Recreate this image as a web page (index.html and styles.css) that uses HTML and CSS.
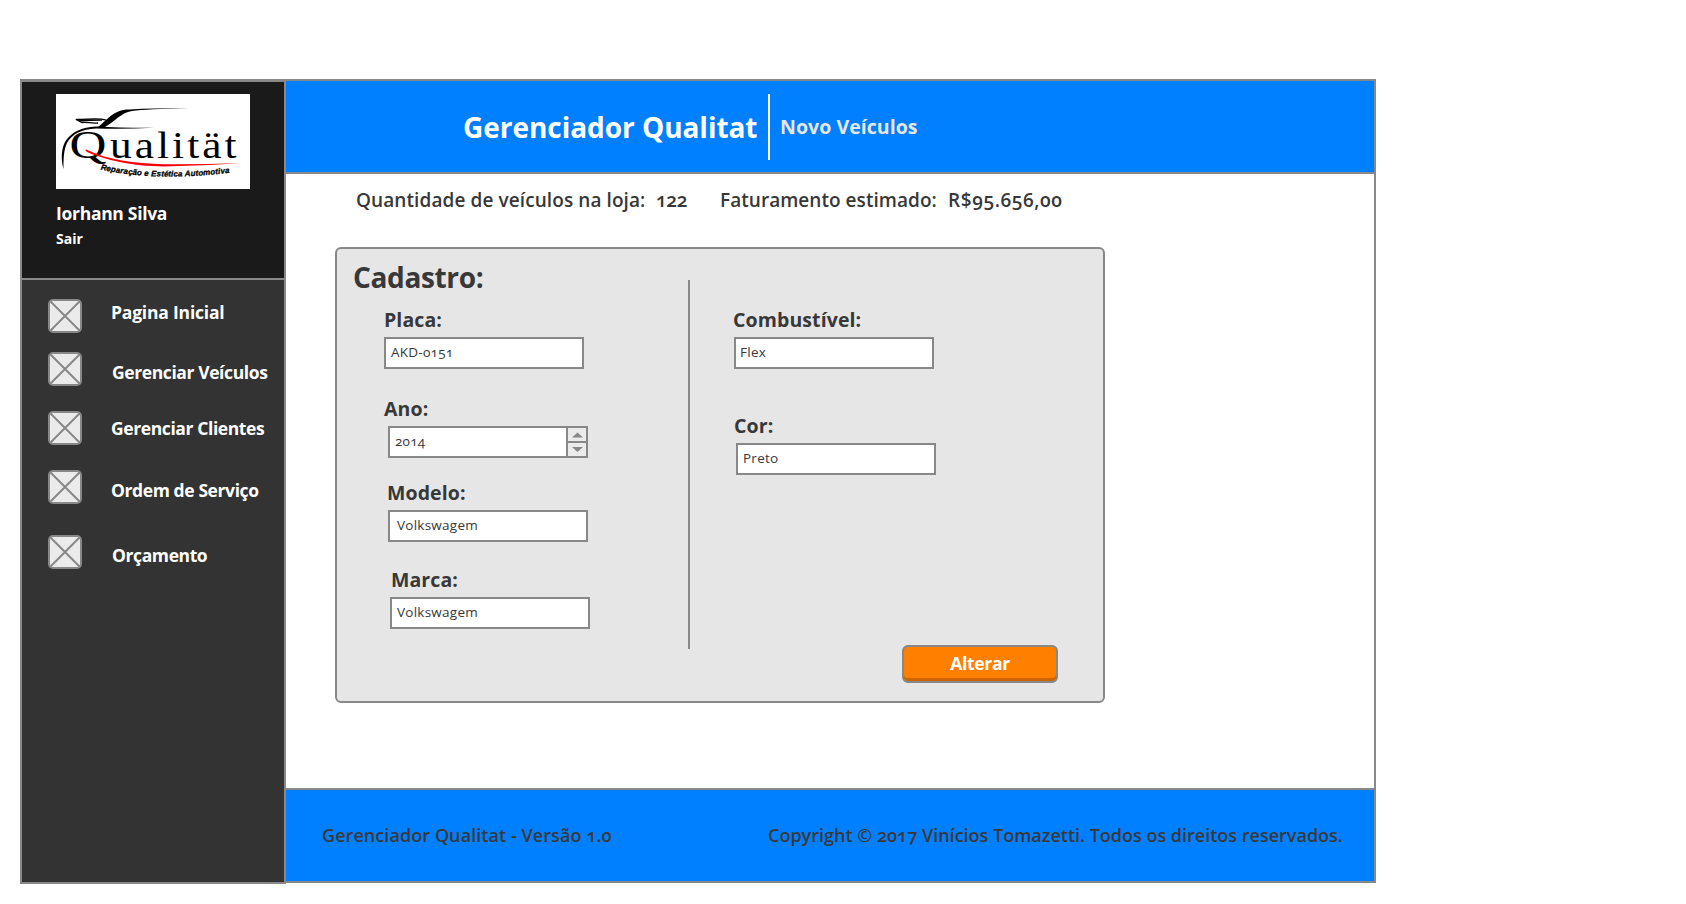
FILE: index.html
```html
<!DOCTYPE html>
<html lang="pt-BR">
<head>
<meta charset="utf-8">
<title>Gerenciador Qualitat</title>
<link rel="stylesheet" href="styles.css">
</head>
<body>
<svg class="defs" width="0" height="0">
  <symbol id="placeholder" viewBox="0 0 34 34">
    <rect x="1" y="1" width="32" height="32" rx="4" fill="#ebebeb" stroke="#888" stroke-width="2"/>
    <path d="M2 2 32 32M32 2 2 32" stroke="#888" stroke-width="2"/>
  </symbol>
</svg>
<div class="app">
  <aside class="sidebar">
    <div class="profile">
      <svg class="logo" viewBox="0 0 194 95">
        <rect width="194" height="95" fill="#fff"/>
        <path d="M41 34C51 26 58 15 74 15.500Q90 14 133 14.300Q90 15 76 17C64 19 60 27 48 33.500Z" fill="#000"/>
        <path d="M50 26C42 23.500 32 25.500 20 25.500L26 28.500C32 27.500 35 30 42 29" fill="none" stroke="#000" stroke-width="1.300"/>
        <path d="M19 25.300Q34 25 46 25.500L46 26.800Q34 27 25 27.500Z" fill="#000"/>
        <path d="M7.500 75C5 66 5 56 9 48C15 38 26 33 40 32.500Q66 34 98 33.800Q66 35.500 40 34.500C26 35 16 40 11 49C7.500 56 7.500 66 7.500 75Z" fill="#000"/>
        <text class="wordmark" font-size="40" transform="translate(13.500 64) scale(1.280 1)">Q</text>
        <text class="wordmark" font-size="38" transform="translate(54 64) scale(1.140 1)" textLength="111">ualität</text>
        <path d="M30 55.500C52 66 78 69.500 108 70.200Q148 70.500 186 69Q148 72 108 72.500C74 72 50 66 31 58Q28.500 56 30 55.500Z" fill="#f00"/>
        <path id="arc" d="M44.500 75.500Q100 88 176 78.500" fill="none"/>
        <text class="tagline"><textPath href="#arc" textLength="130">Reparação e Estética Automotiva</textPath></text>
      </svg>
      <div class="user">Iorhann Silva</div>
      <a class="logout">Sair</a>
    </div>
    <nav class="menu">
      <a class="item home"><svg class="icon"><use href="#placeholder"/></svg><span>Pagina Inicial</span></a>
      <a class="item vehicles"><svg class="icon"><use href="#placeholder"/></svg><span>Gerenciar Veículos</span></a>
      <a class="item clients"><svg class="icon"><use href="#placeholder"/></svg><span>Gerenciar Clientes</span></a>
      <a class="item orders"><svg class="icon"><use href="#placeholder"/></svg><span>Ordem de Serviço</span></a>
      <a class="item quotes"><svg class="icon"><use href="#placeholder"/></svg><span>Orçamento</span></a>
    </nav>
  </aside>
  <div class="main">
    <header class="header">
      <h1 class="title">Gerenciador Qualitat</h1>
      <div class="rule"></div>
      <h2 class="subtitle">Novo Veículos</h2>
    </header>
    <main class="content">
      <div class="stats">
        <span class="stat-count">Quantidade de veículos na loja:</span>
        <span class="count">122</span>
        <span class="stat-revenue">Faturamento estimado:</span>
        <span class="revenue">R$95.656,00</span>
      </div>
      <section class="panel">
        <div class="column left">
          <h3 class="heading">Cadastro:</h3>
          <div class="field plate"><label>Placa:</label><div class="input">AKD-0151</div></div>
          <div class="field year"><label>Ano:</label>
            <div class="input spin"><span>2014</span>
              <div class="steps">
                <svg viewBox="0 0 18 13"><path d="M4 9.500h11L9.500 4.500z" fill="#888"/></svg>
                <svg viewBox="0 0 18 13"><path d="M4 4h11L9.500 9z" fill="#888"/></svg>
              </div>
            </div>
          </div>
          <div class="field model"><label>Modelo:</label><div class="input">Volkswagem</div></div>
          <div class="field brand"><label>Marca:</label><div class="input">Volkswagem</div></div>
        </div>
        <div class="split"></div>
        <div class="column right">
          <div class="field fuel"><label>Combustível:</label><div class="input">Flex</div></div>
          <div class="field color"><label>Cor:</label><div class="input">Preto</div></div>
          <button class="submit">Alterar</button>
        </div>
      </section>
    </main>
    <footer class="footer">
      <span class="version">Gerenciador Qualitat - Versão 1.0</span>
      <span class="copyright">Copyright © 2017 Vinícios Tomazetti. Todos os direitos reservados.</span>
    </footer>
  </div>
</div>
</body>
</html>
```
FILE: styles.css
```css
* { box-sizing: border-box; }
body {
  margin: 0;
  background: #fff;
  color: #383838;
  font-family: "Open Sans", "Noto Sans", sans-serif;
  font-variant-numeric: oldstyle-nums;
}
h1, h2, h3 { margin: 0; }
.defs { position: absolute; }
.app { display: flex; align-items: flex-start; width: 1356px; padding-top: 79px; margin-left: 20px; }

.sidebar {
  width: 266px;
  height: 805px;
  background: #333;
  border: 2px solid #888;
  border-top-width: 3px;
  color: #fff;
  font-weight: 700;
}
.profile {
  height: 198px;
  padding: 12px 0 0 34px;
  background: #1a1a1a;
  border-bottom: 2px solid #888;
}
.logo { display: block; width: 194px; height: 95px; }
.wordmark { font-family: "Liberation Serif", serif; font-weight: 400; }
.tagline { font: italic 700 8px "Liberation Sans", sans-serif; stroke: #000; stroke-width: .3px; }
.user { margin-top: 12px; font-size: 17.5px; line-height: 24px; letter-spacing: -.3px; }
.logout { display: block; margin: 4px 0 0; font-size: 14px; line-height: 20px; }
.menu { padding: 19px 0 0 26px; }
.item { display: flex; height: 34px; gap: 30px; font-size: 17.5px; line-height: 24px; letter-spacing: -.4px; white-space: nowrap; }
.icon { width: 34px; height: 34px; flex: none; }
.item span { padding-top: 8px; }
.item.home span { padding-top: 1px; letter-spacing: -.2px; }
.item.clients span { padding-top: 5px; }
.vehicles { margin-top: 19px; }
.clients, .orders { margin-top: 25px; }
.quotes { margin-top: 31px; }
.home, .clients, .orders { gap: 29px; }

.main {
  display: flex;
  flex-direction: column;
  width: 1090px;
  height: 804px;
  border: solid #888;
  border-width: 2px 2px 2px 0;
}
.header { display: flex; height: 93px; padding-left: 177px; background: #0080ff; border-bottom: 2px solid #888; }
.title { width: 305px; padding-top: 26px; color: #fff; font-size: 28px; line-height: 40px; letter-spacing: -.04px; white-space: nowrap; }
.rule { width: 2px; height: 66px; margin-top: 13px; background: #fff; }
.subtitle { padding: 34px 0 0 10px; color: #e6e6e6; font-size: 19.5px; line-height: 24px; letter-spacing: .05px; }

.content { flex: 1; }
.stats { display: flex; padding: 14px 0 0 70px; font-size: 19px; font-weight: 600; line-height: 24px; white-space: nowrap; }
.stat-count { width: 300px; letter-spacing: .09px; }
.count { width: 64px; letter-spacing: -.33px; }
.stat-revenue { width: 228px; letter-spacing: .04px; }
.revenue { letter-spacing: .59px; }
.panel {
  display: flex;
  width: 770px;
  height: 456px;
  margin: 35px 0 0 49px;
  background: #e6e6e6;
  border: 2px solid #888;
  border-radius: 6px;
}
.left { width: 351px; padding-top: 8px; }
.heading { padding-left: 16px; font-size: 28px; font-weight: 700; line-height: 40px; letter-spacing: -.35px; }
.split { width: 2px; height: 369px; margin-top: 31px; background: #888; }
.right { width: 413px; padding-top: 59px; }
.field label { display: block; margin-bottom: 5px; font-size: 19.5px; font-weight: 700; line-height: 24px; letter-spacing: .1px; }
.input {
  width: 200px;
  height: 32px;
  padding-left: 5px;
  background: #fff;
  border: 2px solid #888;
  font-size: 13.5px;
  line-height: 26px;
  letter-spacing: .25px;
}
.plate { margin: 11px 0 0 47px; }
.year { margin: 28px 0 0 51px; }
.year label { margin-left: -4px; }
.model { margin: 23px 0 0 51px; }
.model .input { padding-left: 7px; }
.model label { margin-left: -1px; }
.brand { margin: 26px 0 0 53px; }
.brand label { margin-left: 1px; }
.fuel { margin-left: 44px; }
.fuel .input { padding-left: 4px; }
.fuel label { margin-left: -1px; }
.color { margin: 45px 0 0 46px; }
.color label { margin-left: -2px; }
.spin { display: flex; justify-content: space-between; }
.steps { display: grid; grid-template-rows: 13px 13px; gap: 2px; width: 20px; border-left: 2px solid #888; background: #888; }
.steps svg { display: block; width: 18px; height: 13px; background: #ebebeb; }
.submit {
  display: block;
  width: 156px;
  height: 38px;
  margin: 170px 0 0 212px;
  padding: 0 0 2px;
  color: #fff;
  background: #ff8000;
  border: 2px solid #888;
  border-radius: 6px;
  box-shadow: inset 0 -3px #cc6600;
  font: 700 17.5px/24px "Open Sans", sans-serif;
  letter-spacing: -.3px;
}
.footer {
  display: flex;
  height: 93px;
  padding: 33px 0 0 36px;
  background: #0080ff;
  border-top: 2px solid #888;
  font-size: 18px;
  font-weight: 600;
  line-height: 24px;
  white-space: nowrap;
}
.version { width: 446px; letter-spacing: .07px; }
```
